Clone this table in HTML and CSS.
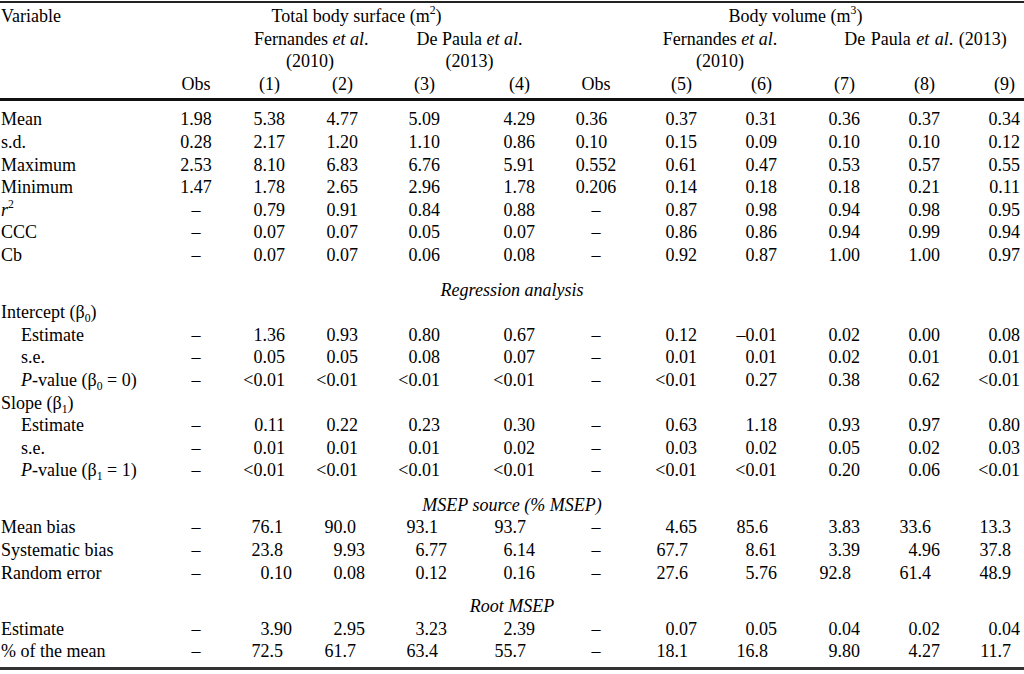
FILE: index.html
```html
<!DOCTYPE html>
<html lang="en">
<head>
<meta charset="utf-8">
<title>Body surface and volume prediction</title>
<link rel="stylesheet" href="styles.css">
</head>
<body>
<div class="page">
<div class="hr hr-top"></div>
<table class="tbl">
  <colgroup>
    <col class="w-lab"><col class="w-obs1"><col class="w-c1"><col class="w-c2"><col class="w-c3"><col class="w-c4">
    <col class="w-obs2"><col class="w-c5"><col class="w-c6"><col class="w-c7"><col class="w-c8"><col class="w-c9">
  </colgroup>
  <thead>
    <tr class="h1">
      <th class="lab">Variable</th>
      <th colspan="5" class="grp g-tbs">Total body surface (m<sup>2</sup>)</th>
      <th colspan="6" class="grp g-vol">Body volume (m<sup>3</sup>)</th>
    </tr>
    <tr>
      <th></th><th></th>
      <th colspan="2" rowspan="2" class="src s-f1">Fernandes <i>et al</i>.<br>(2010)</th>
      <th colspan="2" rowspan="2" class="src s-d1">De Paula <i>et al</i>.<br>(2013)</th>
      <th></th>
      <th colspan="2" rowspan="2" class="src s-f2">Fernandes <i>et al</i>.<br>(2010)</th>
      <th colspan="3" class="src s-d2">De Paula <i>et al</i>. (2013)</th>
    </tr>
    <tr><th></th><th></th><th></th><th colspan="3"></th></tr>
    <tr class="hlast">
      <th></th><th class="obs">Obs</th>
      <th class="num">(1)</th><th class="num">(2)</th><th class="num">(3)</th><th class="num">(4)</th>
      <th class="obs">Obs</th>
      <th class="num">(5)</th><th class="num">(6)</th><th class="num">(7)</th><th class="num">(8)</th><th class="num">(9)</th>
    </tr>
  </thead>
</table>
<div class="hr hr-mid"></div>
<table class="tbl">
  <colgroup>
    <col class="w-lab"><col class="w-obs1"><col class="w-c1"><col class="w-c2"><col class="w-c3"><col class="w-c4">
    <col class="w-obs2"><col class="w-c5"><col class="w-c6"><col class="w-c7"><col class="w-c8"><col class="w-c9">
  </colgroup>
  <tbody>
    <tr class="first"><td class="lab">Mean</td><td>1.98</td><td>5.38</td><td>4.77</td><td>5.09</td><td>4.29</td><td>0.36<span class="p"></span></td><td>0.37</td><td>0.31</td><td>0.36</td><td>0.37</td><td>0.34</td></tr>
    <tr><td class="lab">s.d.</td><td>0.28</td><td>2.17</td><td>1.20</td><td>1.10</td><td>0.86</td><td>0.10<span class="p"></span></td><td>0.15</td><td>0.09</td><td>0.10</td><td>0.10</td><td>0.12</td></tr>
    <tr><td class="lab">Maximum</td><td>2.53</td><td>8.10</td><td>6.83</td><td>6.76</td><td>5.91</td><td>0.552</td><td>0.61</td><td>0.47</td><td>0.53</td><td>0.57</td><td>0.55</td></tr>
    <tr><td class="lab">Minimum</td><td>1.47</td><td>1.78</td><td>2.65</td><td>2.96</td><td>1.78</td><td>0.206</td><td>0.14</td><td>0.18</td><td>0.18</td><td>0.21</td><td>0.11</td></tr>
    <tr><td class="lab"><i>r</i><sup>2</sup></td><td>–</td><td>0.79</td><td>0.91</td><td>0.84</td><td>0.88</td><td>–</td><td>0.87</td><td>0.98</td><td>0.94</td><td>0.98</td><td>0.95</td></tr>
    <tr><td class="lab">CCC</td><td>–</td><td>0.07</td><td>0.07</td><td>0.05</td><td>0.07</td><td>–</td><td>0.86</td><td>0.86</td><td>0.94</td><td>0.99</td><td>0.94</td></tr>
    <tr><td class="lab">Cb</td><td>–</td><td>0.07</td><td>0.07</td><td>0.06</td><td>0.08</td><td>–</td><td>0.92</td><td>0.87</td><td>1.00</td><td>1.00</td><td>0.97</td></tr>

    <tr class="sec"><td colspan="12">Regression analysis</td></tr>
    <tr><td class="lab" colspan="12">Intercept (β<sub>0</sub>)</td></tr>
    <tr><td class="lab ind">Estimate</td><td>–</td><td>1.36</td><td>0.93</td><td>0.80</td><td>0.67</td><td>–</td><td>0.12</td><td>–0.01</td><td>0.02</td><td>0.00</td><td>0.08</td></tr>
    <tr><td class="lab ind">s.e.</td><td>–</td><td>0.05</td><td>0.05</td><td>0.08</td><td>0.07</td><td>–</td><td>0.01</td><td>0.01</td><td>0.02</td><td>0.01</td><td>0.01</td></tr>
    <tr><td class="lab ind"><i>P</i>-value (β<sub>0</sub> = 0)</td><td>–</td><td>&lt;0.01</td><td>&lt;0.01</td><td>&lt;0.01</td><td>&lt;0.01</td><td>–</td><td>&lt;0.01</td><td>0.27</td><td>0.38</td><td>0.62</td><td>&lt;0.01</td></tr>
    <tr><td class="lab" colspan="12">Slope (β<sub>1</sub>)</td></tr>
    <tr><td class="lab ind">Estimate</td><td>–</td><td>0.11</td><td>0.22</td><td>0.23</td><td>0.30</td><td>–</td><td>0.63</td><td>1.18</td><td>0.93</td><td>0.97</td><td>0.80</td></tr>
    <tr><td class="lab ind">s.e.</td><td>–</td><td>0.01</td><td>0.01</td><td>0.01</td><td>0.02</td><td>–</td><td>0.03</td><td>0.02</td><td>0.05</td><td>0.02</td><td>0.03</td></tr>
    <tr><td class="lab ind"><i>P</i>-value (β<sub>1</sub> = 1)</td><td>–</td><td>&lt;0.01</td><td>&lt;0.01</td><td>&lt;0.01</td><td>&lt;0.01</td><td>–</td><td>&lt;0.01</td><td>&lt;0.01</td><td>0.20</td><td>0.06</td><td>&lt;0.01</td></tr>

    <tr class="sec"><td colspan="12">MSEP source (% MSEP)</td></tr>
    <tr class="ms"><td class="lab">Mean bias</td><td>–</td><td>76.1<span class="p"></span></td><td>90.0<span class="p"></span></td><td>93.1<span class="p"></span></td><td>93.7<span class="p"></span></td><td>–</td><td>4.65</td><td>85.6<span class="p"></span></td><td>3.83</td><td>33.6<span class="p"></span></td><td>13.3<span class="p"></span></td></tr>
    <tr class="ms"><td class="lab">Systematic bias</td><td>–</td><td>23.8<span class="p"></span></td><td>9.93</td><td>6.77</td><td>6.14</td><td>–</td><td>67.7<span class="p"></span></td><td>8.61</td><td>3.39</td><td>4.96</td><td>37.8<span class="p"></span></td></tr>
    <tr class="ms"><td class="lab">Random error</td><td>–</td><td>0.10</td><td>0.08</td><td>0.12</td><td>0.16</td><td>–</td><td>27.6<span class="p"></span></td><td>5.76</td><td>92.8<span class="p"></span></td><td>61.4<span class="p"></span></td><td>48.9<span class="p"></span></td></tr>

    <tr class="sec sec-b"><td colspan="12">Root MSEP</td></tr>
    <tr class="ms"><td class="lab">Estimate</td><td>–</td><td>3.90</td><td>2.95</td><td>3.23</td><td>2.39</td><td>–</td><td>0.07</td><td>0.05</td><td>0.04</td><td>0.02</td><td>0.04</td></tr>
    <tr class="ms last"><td class="lab">% of the mean</td><td>–</td><td>72.5<span class="p"></span></td><td>61.7<span class="p"></span></td><td>63.4<span class="p"></span></td><td>55.7<span class="p"></span></td><td>–</td><td>18.1<span class="p"></span></td><td>16.8<span class="p"></span></td><td>9.80</td><td>4.27</td><td>11.7<span class="p"></span></td></tr>
  </tbody>
</table>
<div class="hr hr-bot"></div>
</div>
</body>
</html>
```

FILE: styles.css
```css
html, body {
  margin: 0;
  padding: 0;
  background: #ffffff;
}

body {
  font-family: "Liberation Serif", "Times New Roman", serif;
  font-size: 18px;
  color: #000000;
}

.page {
  width: 1024px;
  padding-top: 1px;
  display: flex;
  flex-direction: column;
}

/* horizontal rules */
.hr {
  height: 3px;
  width: 100%;
  background-color: #222222;
  flex: none;
}

.hr-top {
  height: 2px;
}

.hr-mid {
  background-color: #111111;
}

.hr-bot {
  background-color: #333333;
}

.tbl {
  width: 1024px;
  table-layout: fixed;
  border-collapse: separate;
  border-spacing: 0;
}

.w-lab { width: 150px; }
.w-obs1 { width: 92px; }
.w-c1 { width: 51px; }
.w-c2 { width: 73px; }
.w-c3 { width: 82px; }
.w-c4 { width: 95px; }
.w-obs2 { width: 106px; }
.w-c5 { width: 56px; }
.w-c6 { width: 80px; }
.w-c7 { width: 83px; }
.w-c8 { width: 80px; }
.w-c9 { width: 76px; }

.tbl th,
.tbl td {
  font-weight: normal;
  line-height: 22.6px;
  padding: 0 8px 0 0;
  text-align: right;
  vertical-align: top;
  white-space: nowrap;
}

.tbl th:last-child,
.tbl td:last-child {
  padding-right: 4px;
}

/* header */
.tbl .h1 th {
  padding-top: 2px;
}

.tbl .hlast th {
  padding-bottom: 3px;
}

.tbl .lab {
  text-align: left;
  padding-left: 1px;
  padding-right: 0;
}

.tbl .grp,
.tbl .src {
  text-align: center;
  padding-right: 0;
}

.tbl .g-tbs { padding-left: 20px; }
.tbl .g-vol { padding-left: 28px; }
.tbl .s-f1 { padding-left: 12px; }
.tbl .s-d1 { padding-left: 30px; }
.tbl .s-f2 { padding-left: 6px; }
.tbl .s-d2 { padding-left: 46px; word-spacing: 1px; }

.tbl .obs {
  text-align: center;
  padding-right: 0;
}

.tbl th.num {
  padding-right: 13px;
}

.tbl th.num:last-child {
  padding-right: 9px;
}

/* body */
.tbl td:nth-child(2),
.tbl td:nth-child(7) {
  text-align: center;
  padding-right: 0;
}

.tbl .ind {
  padding-left: 21px;
}

.tbl .first td {
  padding-top: 7px;
}

.tbl .sec td {
  padding: 12px 0 0 0;
  text-align: center;
  font-style: italic;
}

.tbl .sec-b td {
  padding-top: 11px;
}

.ms td:nth-child(3),
.ms td:nth-child(4),
.ms td:nth-child(5) {
  padding-right: 1px;
}

.tbl .last td {
  padding-bottom: 4px;
}

.p {
  display: inline-block;
  width: 0.5em;
}

sup,
sub {
  font-size: 0.65em;
  line-height: 0;
}

sup {
  vertical-align: 0.65em;
}

sub {
  vertical-align: -0.3em;
}
```
